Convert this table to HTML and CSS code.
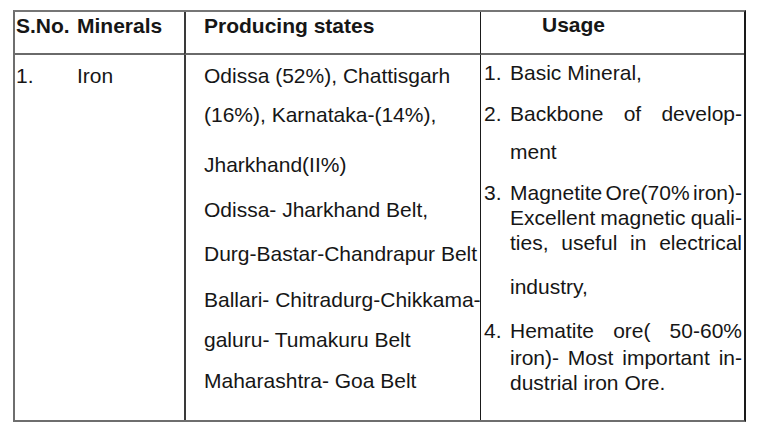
FILE: index.html
```html
<!DOCTYPE html>
<html lang="en">
<head>
<meta charset="utf-8">
<title>Minerals</title>
<link rel="stylesheet" href="styles.css">
</head>
<body>
<div class="sheet">
  <div class="grid">
    <div class="cell head c-sno">S.No.</div>
    <div class="cell head c-min">Minerals</div>
    <div class="cell head c-states">Producing states</div>
    <div class="cell head c-usage usage-head">Usage</div>

    <div class="cell body c-sno"><div class="ln first">1.</div></div>
    <div class="cell body c-min"><div class="ln first">Iron</div></div>
    <div class="cell body c-states">
      <div class="ln first">Odissa (52%), Chattisgarh</div>
      <div class="ln mt14">(16%), Karnataka-(14%),</div>
      <div class="ln mt25">Jharkhand(II%)</div>
      <div class="ln mt20">Odissa- Jharkhand Belt,</div>
      <div class="ln mt19">Durg-Bastar-Chandrapur Belt</div>
      <div class="ln mt21">Ballari- Chitradurg-Chikkama-</div>
      <div class="ln mt15">galuru- Tumakuru Belt</div>
      <div class="ln mt16">Maharashtra- Goa Belt</div>
    </div>
    <div class="cell body c-usage">
      <div class="item">
        <span class="num">1.</span>
        <div class="txt"><div class="ln">Basic Mineral,</div></div>
      </div>
      <div class="item mt16">
        <span class="num">2.</span>
        <div class="txt">
          <div class="ln just">Backbone of develop-</div>
          <div class="ln mt13">ment</div>
        </div>
      </div>
      <div class="item mt16">
        <span class="num">3.</span>
        <div class="txt">
          <div class="ln just">Magnetite Ore(70% iron)-</div>
          <div class="ln just">Excellent magnetic quali-</div>
          <div class="ln just">ties, useful in electrical</div>
          <div class="ln mt19">industry,</div>
        </div>
      </div>
      <div class="item mt19">
        <span class="num">4.</span>
        <div class="txt">
          <div class="ln just">Hematite ore( 50-60%</div>
          <div class="ln just mt2">iron)- Most important in-</div>
          <div class="ln">dustrial iron Ore.</div>
        </div>
      </div>
    </div>
  </div>
</div>
</body>
</html>
```

FILE: styles.css
```css
html, body {
  margin: 0;
  padding: 0;
  background: #ffffff;
}

body {
  font-family: "Liberation Sans", Arial, sans-serif;
  font-size: 21px;
  color: #161616;
}

.sheet {
  padding: 10px 0 0 13px;
}

.grid {
  display: grid;
  grid-template-columns: 62px 107px 296px 264px;
  grid-template-rows: 43px 365px;
  width: 729px;
  border-top: 2px solid #767676;
  border-left: 2px solid #6e6e6e;
  border-right: 2px solid #1a1a1a;
  border-bottom: 2px solid #6e6e6e;
}

.cell {
  box-sizing: border-box;
}

.head {
  font-weight: bold;
  line-height: 25px;
  padding-top: 1px;
  border-bottom: 2px solid #6a6a6a;
  white-space: nowrap;
}

.c-sno {
  padding-left: 1px;
}

.c-min {
  padding-left: 0;
}

.c-states {
  border-left: 2px solid #3a3a3a;
  padding-left: 18px;
}

.c-usage {
  border-left: 1px solid #1a1a1a;
  padding-left: 3px;
  padding-right: 2px;
}

.usage-head {
  padding-left: 61px;
  padding-top: 0;
}

.body.c-usage {
  padding-top: 5px;
}

.ln {
  line-height: 25px;
  height: 25px;
  white-space: nowrap;
}

.ln.first {
  margin-top: 8px;
}

.item {
  display: flex;
  align-items: flex-start;
}

.num {
  display: block;
  flex: 0 0 26px;
  line-height: 25px;
}

.txt {
  flex: 1 1 auto;
  min-width: 0;
}

.just {
  white-space: normal;
  text-align: justify;
  text-align-last: justify;
  word-spacing: -4px;
}

.mt2 { margin-top: 2px; }
.mt13 { margin-top: 13px; }
.mt14 { margin-top: 14px; }
.mt15 { margin-top: 15px; }
.mt16 { margin-top: 16px; }
.mt19 { margin-top: 19px; }
.mt20 { margin-top: 20px; }
.mt21 { margin-top: 21px; }
.mt25 { margin-top: 25px; }
```
